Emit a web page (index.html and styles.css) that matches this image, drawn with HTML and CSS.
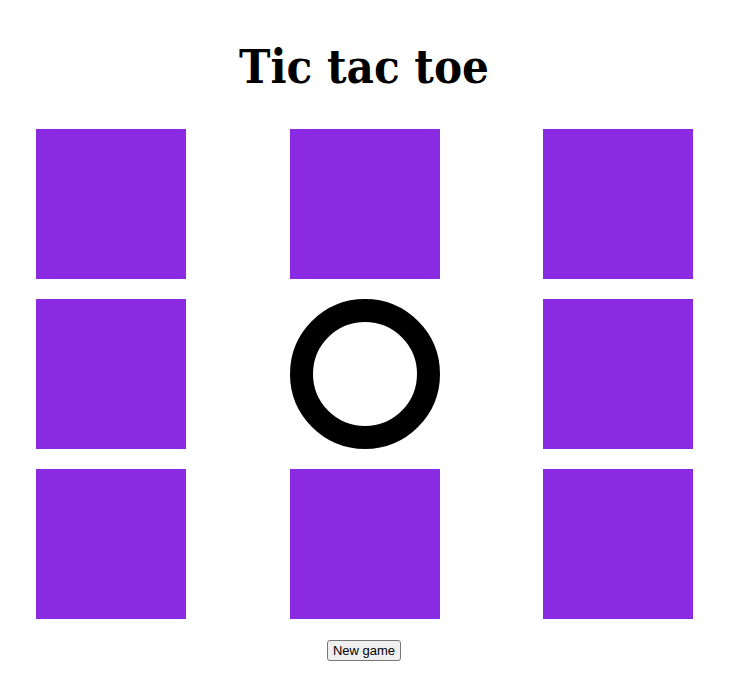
FILE: index.html
```html
<!DOCTYPE html>
<html>
<head>
<meta charset="utf-8">
<link rel="stylesheet" href="styles.css">
</head>
<body>
<div class="page">
  <h1 class="title">Tic tac toe</h1>
  <div class="board">
    <div class="cell"></div>
    <div class="cell"></div>
    <div class="cell"></div>
    <div class="cell"></div>
    <div class="cell cell-o"><div class="ring"></div></div>
    <div class="cell"></div>
    <div class="cell"></div>
    <div class="cell"></div>
    <div class="cell"></div>
  </div>
  <div class="actions"><button class="new-game">New game</button></div>
</div>
</body>
</html>
```
FILE: styles.css
```css
html, body { margin: 0; background: #fff; }
.page { width: 728px; padding-top: 1px; }
.title {
  font-family: "DejaVu Serif Condensed", "DejaVu Serif", serif;
  font-weight: bold;
  font-stretch: condensed;
  font-size: 47px;
  text-align: center;
  margin: 31px 0 0 0;
  line-height: 69px;
  height: 69px;
}
.board {
  margin: 28px 0 0 36px;
  width: 657px;
  display: grid;
  grid-template-columns: repeat(3, 150px);
  justify-content: space-between;
  row-gap: 20px;
}
.cell { width: 150px; height: 150px; background: #8a2be2; }
.cell-o { background: transparent; }
.ring {
  width: 150px; height: 150px; box-sizing: border-box;
  border: 23px solid #000; border-radius: 50%;
}
.actions { text-align: center; margin-top: 21px; }
.new-game {
  font-family: "Liberation Sans", Arial, sans-serif;
  font-size: 13px;
  padding: 2px 5px;
  border: 1px solid #767676;
  border-radius: 3px;
  background: #efefef;
  color: #000;
}
```
